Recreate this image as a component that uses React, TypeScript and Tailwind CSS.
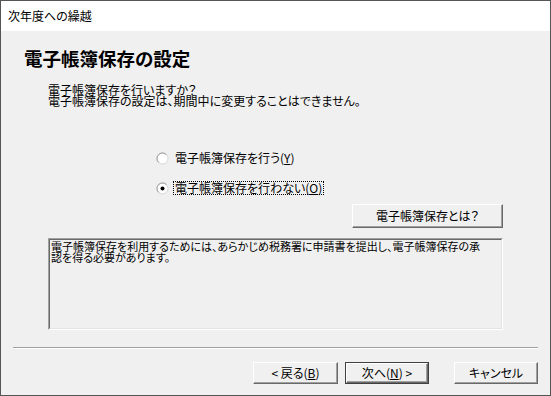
import React from "react";

const FONT = "font-['Noto_Sans_CJK_JP','Noto_Sans',sans-serif] [font-feature-settings:'palt']";

function Radio({ checked }: { checked: boolean }) {
  return (
    <svg width="13" height="13" viewBox="0 0 13 13" className="shrink-0">
      <circle cx="6.5" cy="6.5" r="5.5" fill="#ffffff" stroke="#d4d4d4" />
      <path d="M2.6 10.4 A5.5 5.5 0 0 1 10.4 2.6" fill="none" stroke="#9a9a9a" />
      {checked && <circle cx="6.5" cy="6.5" r="2" fill="#000000" />}
    </svg>
  );
}

function WinButton({
  children,
  isDefault,
  className = "",
}: {
  children: React.ReactNode;
  isDefault?: boolean;
  className?: string;
}) {
  const face = (
    <div className="flex h-full w-full items-center justify-center border border-t-white border-l-white border-r-[#696969] border-b-[#696969] bg-[#f0f0f0] shadow-[inset_-1px_-1px_0_#a0a0a0] text-[12px] leading-none">
      {children}
    </div>
  );
  return (
    <div className={`${className} ${isDefault ? "border border-[#404040]" : ""}`}>
      {face}
    </div>
  );
}

export default function App() {
  return (
    <div className={`w-[551px] h-[396px] border border-[#555555] flex flex-col text-black ${FONT}`}>
      {/* Title bar */}
      <div className="h-[30px] bg-white flex items-center pl-[7px] text-[12px]">
        次年度への繰越
      </div>

      {/* Body */}
      <div className="flex-1 bg-[#f0f0f0] flex flex-col">
        <div className="mt-[17px] pl-[23px] h-[20px] leading-[20px] text-[18.5px] font-bold">
          電子帳簿保存の設定
        </div>

        <div className="mt-[16px] pl-[47px] text-[12px] leading-[11px] whitespace-nowrap">
          <div>電子帳簿保存を行いますか？</div>
          <div>電子帳簿保存の設定は、期間中に変更することはできません。</div>
        </div>

        {/* Radio options */}
        <div className="mt-[45px] pl-[155px] flex flex-col">
          <div className="h-[14px] flex items-center gap-[5px] text-[12px]">
            <Radio checked={false} />
            <span className="leading-[12px] px-[1px]">
              電子帳簿保存を行う(<span className="underline">Y</span>)
            </span>
          </div>
          <div className="mt-[16px] h-[14px] flex items-center gap-[4px] text-[12px]">
            <Radio checked={true} />
            <span className="leading-[12px] px-[1px] border border-dotted border-black">
              電子帳簿保存を行わない(<span className="underline">O</span>)
            </span>
          </div>
        </div>

        <div className="mt-[9px] px-[47px] flex justify-end">
          <WinButton className="w-[151px] h-[24px]">電子帳簿保存とは？</WinButton>
        </div>

        {/* Info box */}
        <div className="mt-[10px] mx-[47px] h-[92px] border border-t-[#a0a0a0] border-l-[#a0a0a0] border-r-white border-b-white">
          <div className="h-full border border-t-[#696969] border-l-[#696969] border-r-[#e3e3e3] border-b-[#e3e3e3] px-[1px] pt-[1px] text-[11px] leading-[11px] whitespace-nowrap">
            <div>電子帳簿保存を利用するためには、あらかじめ税務署に申請書を提出し、電子帳簿保存の承</div>
            <div>認を得る必要があります。</div>
          </div>
        </div>

        {/* Separator */}
        <div className="mt-[17px] mx-[12px]">
          <div className="h-px bg-[#a0a0a0]" />
          <div className="h-px bg-white" />
        </div>

        {/* Wizard buttons */}
        <div className="mt-[13px] mr-[12px] flex justify-end">
          <WinButton className="w-[85px] h-[22px]">
            &lt;&nbsp;戻る(<span className="underline">B</span>)
          </WinButton>
          <WinButton isDefault className="ml-[7px] w-[84px] h-[22px]">
            次へ(<span className="underline">N</span>)&nbsp;&gt;
          </WinButton>
          <WinButton className="ml-[25px] w-[84px] h-[22px]">キャンセル</WinButton>
        </div>
      </div>
    </div>
  );
}
